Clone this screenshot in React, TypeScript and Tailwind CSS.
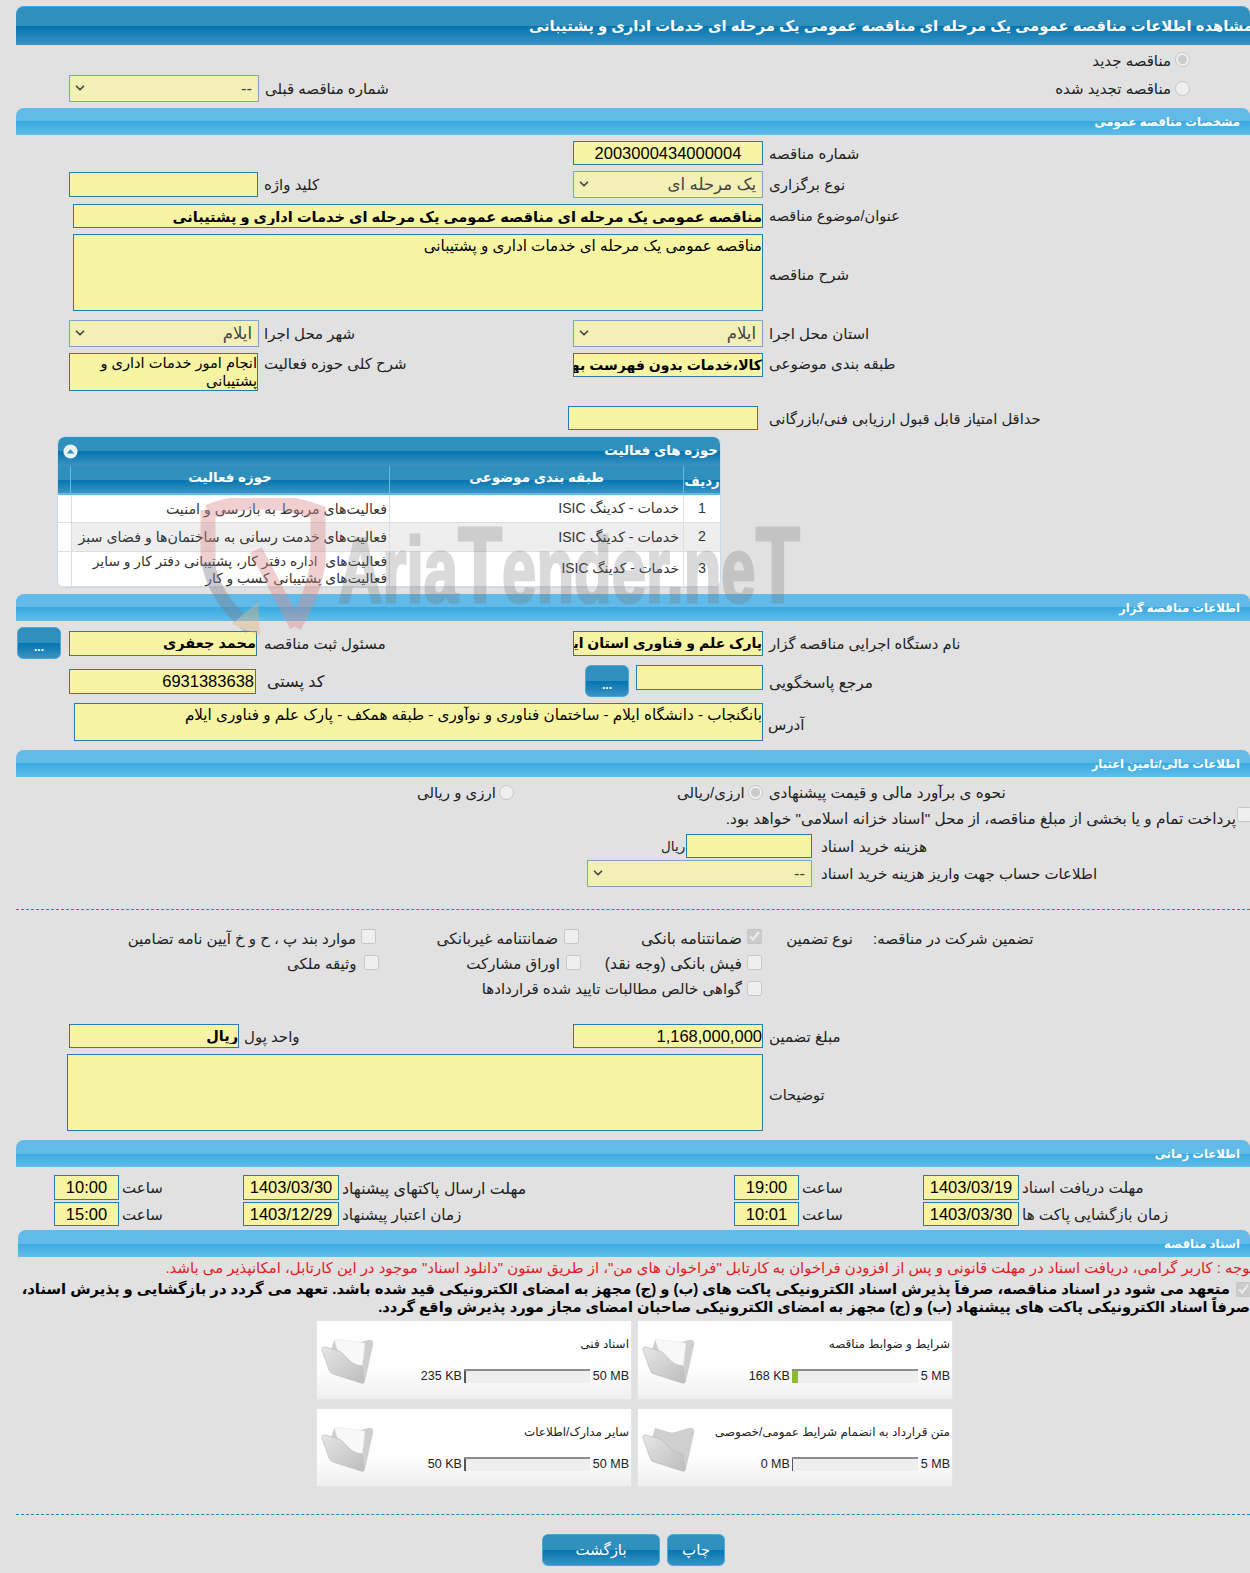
import type {ReactNode} from "react";
import {ChevronDown} from "lucide-react";

const FIELD = "border border-[#2a7ab0] bg-[#f7f5a3] text-black outline-none";
const SELECT = "appearance-none border border-[#7ea6c0] bg-[#f2f0b5] pr-[6px] text-[#444] text-[16.5px] outline-none";
const LABEL = "whitespace-nowrap pt-[2px] text-left text-[#222]";
const NUM = "[font-family:'Liberation_Sans',sans-serif] text-[16.5px]";
const MAIN_GRAD = "bg-[linear-gradient(#2f8fbd_0%,#2f8fbd_50%,#0474ae_50%,#3b93c4_100%)]";
const SECTION_GRAD = "bg-[linear-gradient(#62bae9_0%,#62bae9_50%,#39a9e0_50%,#63bdeb_100%)]";

function Section({title, className}: {title: string; className: string}) {
  return (
    <div
      dir="rtl"
      className={`${SECTION_GRAD} ${className} flex h-[27px] shrink-0 items-center rounded-t-[8px] pr-[10px] text-[11.6px] font-bold text-white`}>
      {title}
    </div>
  );
}

function Field({value = "", className}: {value?: string; className: string}) {
  return <input readOnly dir="rtl" value={value} className={`${FIELD} ${className}`} />;
}

function Picker({value, className}: {value: string; className: string}) {
  return (
    <div className={`relative shrink-0 ${className}`}>
      <select dir="rtl" defaultValue={value} className={`${SELECT} h-full w-full`}>
        <option>{value}</option>
      </select>
      <ChevronDown size={14} strokeWidth={3} className="pointer-events-none absolute left-[4px] top-[6px] text-[#444]" />
    </div>
  );
}

function Label({children, className = "", size = "text-[15px]"}: {children: ReactNode; className?: string; size?: string}) {
  return (
    <span dir="rtl" className={`${LABEL} ${size} ${className}`}>
      {children}
    </span>
  );
}

function Check({checked = false, className = ""}: {checked?: boolean; className?: string}) {
  return <input type="checkbox" disabled readOnly checked={checked} className={`h-[15px] w-[15px] shrink-0 ${className}`} />;
}

function Radio({checked = false, className = ""}: {checked?: boolean; className?: string}) {
  return <input type="radio" disabled readOnly checked={checked} className={`h-[15px] w-[15px] shrink-0 ${className}`} />;
}

function Folder({paper = true}: {paper?: boolean}) {
  return (
    <svg viewBox="0 0 54 47" className="h-[47px] w-[54px] shrink-0">
      <defs>
        <linearGradient id="fl" x1="0" y1="0" x2="1" y2="1">
          <stop offset="0" stopColor="#e6e6e6" />
          <stop offset="1" stopColor="#bdbdbd" />
        </linearGradient>
      </defs>
      <path d="M13 3 L27 7 Q30 8 33 7 L47 3 Q53 2 52 8 L44 44 Q43 47 40 45 L8 20 Z" fill="#cfcfcf" />
      {paper && <path d="M13 2 L44 6 L41 32 L20 24 Z" fill="#f8f8f8" stroke="#e2e2e2" strokeWidth="0.5" />}
      <path d="M1 13 Q0 10 4 10 L15 13 Q20 14 23 18 L29 24 Q32 27 36 28 L41 29 L43 45 Q43 47 40 46 L12 37 Q9 36 8 33 Z" fill="url(#fl)" stroke="#b5b5b5" strokeWidth="0.6" />
    </svg>
  );
}

function DocCard({title, used, max, fill, paper = true}: {title: string; used: string; max: string; fill: string; paper?: boolean}) {
  return (
    <div className="flex h-full w-[316px] shrink-0 items-start border border-[#e4e4e4] bg-[linear-gradient(#ffffff_0%,#ffffff_60%,#efefef_100%)]">
      <div className="ml-[4px] mt-[16px]">
        <Folder paper={paper} />
      </div>
      <div className="flex min-w-0 flex-1 flex-col">
        <div dir="rtl" className="mr-[2px] mt-[15px] h-[16px] whitespace-nowrap text-[12px] leading-[16px] text-[#222]">
          {title}
        </div>
        <div className="mt-[17px] flex h-[14px] items-center justify-end [font-family:'Liberation_Sans',sans-serif] text-[12.5px] text-[#222]">
          <span className="mr-[2px]">{used}</span>
          <div className="flex h-[14px] w-[126px] border-t-2 border-[#8c8c8c] bg-[#eeeeee]">
            <div className={`h-full ${fill}`} />
          </div>
          <span className="ml-[3px] mr-[2px]">{max}</span>
        </div>
      </div>
    </div>
  );
}

function DotsButton() {
  return (
    <button className={`${MAIN_GRAD} h-[32px] w-[44px] rounded-[6px] border border-[#4aa9d8] pt-[8px] text-[12px] font-bold leading-none text-white`}>
      ...
    </button>
  );
}

function Watermark() {
  return (
    <div className="pointer-events-none absolute left-0 top-0 z-10 h-[700px] w-[900px] overflow-hidden">
      <svg viewBox="0 0 130 140" className="absolute left-[198px] top-[498px] h-[140px] w-[130px] opacity-40">
        <path d="M10 14 Q62 -6 120 14 L120 66 Q114 100 96 128" fill="none" stroke="#d98a8a" strokeWidth="15" />
        <path d="M10 12 L10 66" fill="none" stroke="#d98a8a" strokeWidth="15" />
        <path d="M10 64 Q16 100 52 130" fill="none" stroke="#7d7d8a" strokeWidth="13" />
        <path d="M58 52 L98 128" fill="none" stroke="#d98a8a" strokeWidth="13" />
        <path d="M34 126 L60 104 L62 138 Z" fill="#e7b27a" />
      </svg>
      <div className="absolute left-[338px] top-[510px] origin-left scale-x-[.67] whitespace-nowrap text-[92px] font-bold leading-[110px] text-[#6e6e6e] opacity-25 [-webkit-text-stroke:3px_#6e6e6e] [font-family:'Liberation_Sans',sans-serif]">
        Aria<span className="text-[108px]">T</span>ender.ne<span className="text-[108px]">T</span>
      </div>
    </div>
  );
}

const ROWS = [
  {id: "1", activity: "فعالیت‌های مربوط به بازرسی و امنیت", bg: "bg-white", h: "h-[28px]", size: "text-[14.2px]"},
  {id: "2", activity: "فعالیت‌های خدمت رسانی به ساختمان‌ها و فضای سبز", bg: "bg-[#eeeeee]", h: "h-[29px]", size: "text-[14.2px]"},
  {id: "3", activity: "فعالیت‌های \u00a0اداره دفتر کار، پشتیبانی دفتر کار و سایر فعالیت‌های پشتیبانی کسب و کار", bg: "bg-white", h: "h-[35px]", size: "text-[13.8px]"},
];

export default function App() {
  return (
    <div className="relative flex h-[1573px] w-[1250px] flex-col overflow-hidden bg-[#e1e1e1] [font-family:'Liberation_Sans','DejaVu_Sans',sans-serif]">
      <Watermark />

      <div dir="rtl" className={`${MAIN_GRAD} ml-[16px] mt-[6px] flex h-[39px] shrink-0 items-center overflow-hidden rounded-t-[8px] border-t border-[#3ea6e4] text-[14.8px] font-bold text-white`}>
        <span className="mr-[-3px] whitespace-nowrap">مشاهده اطلاعات مناقصه عمومی یک مرحله ای مناقصه عمومی یک مرحله ای خدمات اداری و پشتیبانی</span>
      </div>

      <div className="mt-[7px] flex h-[16px] shrink-0 items-center justify-end pr-[60px]">
        <Label className="mr-[4px] mt-[1px]">مناقصه جدید</Label>
        <Radio checked className="mb-[2px]" />
      </div>
      <div className="mt-[7px] flex h-[27px] shrink-0 items-center">
        <Picker value="--" className="ml-[69px] h-[27px] w-[190px]" />
        <Label className="ml-[6px]">شماره مناقصه قبلی</Label>
        <div className="flex-1" />
        <Label className="mr-[4px]">مناقصه تجدید شده</Label>
        <Radio className="mr-[60px]" />
      </div>

      <Section title="مشخصات مناقصه عمومی" className="ml-[16px] mt-[6px]" />

      <div className="mt-[6px] flex h-[24px] shrink-0 items-center pl-[573px]">
        <input readOnly value="2003000434000004" className={`${FIELD} ${NUM} h-[24px] w-[190px] text-center`} />
        <Label className="ml-[6px]">شماره مناقصه</Label>
      </div>

      <div className="mt-[6px] flex h-[27px] shrink-0 items-center pl-[69px]">
        <div className="flex w-[504px] shrink-0 items-center">
          <Field className="h-[25px] w-[189px]" />
          <Label className="ml-[6px]">کلید واژه</Label>
        </div>
        <Picker value="یک مرحله ای" className="h-[27px] w-[190px]" />
        <Label className="ml-[6px]">نوع برگزاری</Label>
      </div>

      <div className="mt-[6px] flex h-[24px] shrink-0 items-center pl-[73px]">
        <Field value="مناقصه عمومی یک مرحله ای مناقصه عمومی یک مرحله ای خدمات اداری و پشتیبانی" className="h-[24px] w-[690px] text-[14.6px] font-bold" />
        <Label className="ml-[6px]" size="text-[14.5px]">عنوان/موضوع مناقصه</Label>
      </div>

      <div className="mt-[6px] flex h-[77px] shrink-0 items-center pl-[73px]">
        <textarea readOnly dir="rtl" value="مناقصه عمومی یک مرحله ای خدمات اداری و پشتیبانی" className={`${FIELD} h-[77px] w-[690px] resize-none text-[15.2px] text-[#222]`} />
        <Label className="ml-[6px] mt-[4px]">شرح مناقصه</Label>
      </div>

      <div className="mt-[9px] flex h-[27px] shrink-0 items-center pl-[69px]">
        <div className="flex w-[504px] shrink-0 items-center">
          <Picker value="ایلام" className="h-[27px] w-[190px]" />
          <Label className="ml-[5px]">شهر محل اجرا</Label>
        </div>
        <Picker value="ایلام" className="h-[27px] w-[190px]" />
        <Label className="ml-[6px]">استان محل اجرا</Label>
      </div>

      <div className="mt-[6px] flex h-[38px] shrink-0 items-start pl-[69px]">
        <div className="flex w-[504px] shrink-0 items-start">
          <textarea readOnly dir="rtl" value="انجام امور خدمات اداری و پشتیبانی" className={`${FIELD} h-[38px] w-[189px] resize-none overflow-hidden text-[14.6px] leading-[18px] text-[#222]`} />
          <Label className="ml-[6px] mt-[-2px]">شرح کلی حوزه فعالیت</Label>
        </div>
        <Field value="کالا،خدمات بدون فهرست بها" className="h-[24px] w-[190px] text-[14px] font-bold" />
        <Label className="ml-[6px] mt-[-2px]">طبقه بندی موضوعی</Label>
      </div>

      <div className="mt-[15px] flex h-[24px] shrink-0 items-center pl-[568px]">
        <Field className="h-[24px] w-[190px]" />
        <Label className="ml-[11px]" size="text-[14.8px]">حداقل امتیاز قابل قبول ارزیابی فنی/بازرگانی</Label>
      </div>

      <div className="ml-[57px] mt-[6px] h-[152px] w-[664px] shrink-0 overflow-hidden rounded-[8px] border border-[#c9dbe6] bg-white">
        <div className={`${MAIN_GRAD} flex h-[29px] items-center justify-between pl-[5px] pr-[2px]`}>
          <svg viewBox="0 0 16 16" className="h-[15px] w-[15px]">
            <circle cx="8" cy="8" r="7.5" fill="#e8f2f7" />
            <path d="M4 10 L8 5.5 L12 10 Z" fill="#2f8fbd" />
          </svg>
          <span dir="rtl" className="text-[13.4px] font-bold text-white">حوزه های فعالیت</span>
        </div>
        <div className={`${MAIN_GRAD} flex h-[29px] border-b-2 border-[#62bae9] text-[13.4px] font-bold text-white`}>
          <div className="w-[13px] border-r border-[#62bae9]" />
          <div dir="rtl" className="flex w-[319px] justify-center border-r border-[#62bae9] pt-[2px]">حوزه فعالیت</div>
          <div dir="rtl" className="flex w-[294px] justify-center border-r border-[#62bae9] pt-[2px]">طبقه بندی موضوعی</div>
          <div dir="rtl" className="flex flex-1 items-end justify-center pb-[1px]">ردیف</div>
        </div>
        {ROWS.map((r) => (
          <div key={r.id} className={`flex ${r.h} border-b border-[#dedede] text-[#333] ${r.size}`}>
            <div className="w-[13px] bg-white" />
            <div dir="rtl" className={`flex w-[319px] items-center border-l border-r border-[#dedede] pr-[2px] pt-[1px] leading-[17px] ${r.bg}`}>{r.activity}</div>
            <div dir="rtl" className={`flex w-[294px] items-center border-r border-[#dedede] pr-[4px] pt-[1px] ${r.bg}`}>خدمات - کدینگ ISIC</div>
            <div className={`flex flex-1 items-center justify-center ${r.bg}`}>{r.id}</div>
          </div>
        ))}
      </div>

      <Section title="اطلاعات مناقصه گزار" className="ml-[16px] mt-[6px]" />

      <div className="mt-[6px] flex h-[32px] shrink-0 items-center pl-[17px]">
        <div className="flex w-[556px] shrink-0 items-center">
          <DotsButton />
          <Field value="محمد جعفری" className="ml-[8px] h-[25px] w-[188px] text-[14.5px] font-bold" />
          <Label className="ml-[7px]">مسئول ثبت مناقصه</Label>
        </div>
        <Field value="پارک علم و فناوری استان ایلام" className="h-[25px] w-[190px] text-[14px] font-bold" />
        <Label className="ml-[6px]" size="text-[14.8px]">نام دستگاه اجرایی مناقصه گزار</Label>
      </div>

      <div className="mt-[6px] flex h-[32px] shrink-0 items-start pl-[69px]">
        <div className="mt-[3px] flex w-[516px] shrink-0 items-center">
          <input readOnly value="6931383638" className={`${FIELD} ${NUM} h-[25px] w-[187px] pr-[1px] text-right`} />
          <Label className="ml-[11px]" size="text-[16px]">کد پستی</Label>
        </div>
        <DotsButton />
        <Field className="ml-[7px] h-[25px] w-[127px]" />
        <Label className="ml-[6px] mt-[4px]" size="text-[15.4px]">مرجع پاسخگویی</Label>
      </div>

      <div className="mt-[6px] flex h-[38px] shrink-0 items-center pl-[74px]">
        <textarea readOnly dir="rtl" value="بانگنجاب - دانشگاه ایلام - ساختمان فناوری و نوآوری - طبقه همکف - پارک علم و فناوری ایلام" className={`${FIELD} h-[38px] w-[689px] resize-none text-[15.2px] text-[#222]`} />
        <Label className="ml-[5px] mt-[4px]">آدرس</Label>
      </div>

      <Section title="اطلاعات مالی/تامین اعتبار" className="ml-[16px] mt-[9px]" />

      <div className="mt-[7px] flex h-[16px] shrink-0 items-center pl-[420px]">
        <Label className="w-[76px]">ارزی و ریالی</Label>
        <Radio className="ml-[3px]" />
        <Label className="ml-[163px]">ارزی/ریالی</Label>
        <Radio checked className="ml-[3px]" />
        <Label className="ml-[6px]" size="text-[15.3px]">نحوه ی برآورد مالی و قیمت پیشنهادی</Label>
      </div>

      <div className="mt-[7px] flex h-[24px] shrink-0 items-start justify-end">
        <Label className="mr-[1px] mt-[-2px]" size="text-[15.35px]">پرداخت تمام و یا بخشی از مبلغ مناقصه، از محل "اسناد خزانه اسلامی" خواهد بود.</Label>
        <Check className="mr-[-2px]" />
      </div>

      <div className="mt-[3px] flex h-[24px] shrink-0 items-center pl-[661px]">
        <Label className="w-[25px]" size="text-[13.5px]">ریال</Label>
        <Field className="h-[24px] w-[126px]" />
        <Label className="ml-[9px]" size="text-[15.4px]">هزینه خرید اسناد</Label>
      </div>

      <div className="mt-[2px] flex h-[27px] shrink-0 items-center pl-[587px]">
        <Picker value="--" className="h-[27px] w-[225px]" />
        <Label className="ml-[9px]">اطلاعات حساب جهت واریز هزینه خرید اسناد</Label>
      </div>

      <div className="ml-[16px] mt-[22px] h-px shrink-0 border-t border-dashed border-[#2a85b8]" />

      <div className="mt-[18px] flex h-[16px] shrink-0 items-center">
        <Label className="ml-[130px] mt-[4px] w-[226px]">موارد بند پ ، ح و خ آیین نامه تضامین</Label>
        <Check className="ml-[5px]" />
        <Label className="ml-[62px] mt-[4px] w-[120px]" size="text-[15.4px]">ضمانتنامه غیربانکی</Label>
        <Check className="ml-[6px]" />
        <Label className="ml-[62px] mt-[4px] w-[101px]" size="text-[15.5px]">ضمانتنامه بانکی</Label>
        <Check className="ml-[5px]" checked />
        <Label className="ml-[25px] mt-[4px] w-[66px]">نوع تضمین</Label>
        <Label className="ml-[20px] mt-[4px]">تضمین شرکت در مناقصه:</Label>
      </div>

      <div className="mt-[10px] flex h-[16px] shrink-0 items-center">
        <Label className="ml-[287px] mt-[2px] w-[72px]">وثیقه ملکی</Label>
        <Check className="ml-[5px]" />
        <Label className="ml-[93px] mt-[2px] w-[88px]">اوراق مشارکت</Label>
        <Check className="ml-[6px]" />
        <Label className="ml-[24px] mt-[2px] w-[137px]" size="text-[15.7px]">فیش بانکی (وجه نقد)</Label>
        <Check className="ml-[5px]" />
      </div>

      <div className="mt-[10px] flex h-[16px] shrink-0 items-center">
        <Label className="ml-[482px] mt-[1px] w-[260px]">گواهی خالص مطالبات تایید شده قراردادها</Label>
        <Check className="ml-[5px]" />
      </div>

      <div className="mt-[28px] flex h-[24px] shrink-0 items-center pl-[69px]">
        <div className="flex w-[504px] shrink-0 items-center">
          <Field value="ریال" className="h-[24px] w-[170px] text-[14.5px] font-bold" />
          <Label className="ml-[5px]">واحد پول</Label>
        </div>
        <input readOnly value="1,168,000,000" className={`${FIELD} ${NUM} h-[24px] w-[190px] text-right`} />
        <Label className="ml-[6px]">مبلغ تضمین</Label>
      </div>

      <div className="mt-[6px] flex h-[77px] shrink-0 items-center pl-[67px]">
        <textarea readOnly className={`${FIELD} h-[77px] w-[696px] resize-none`} />
        <Label className="ml-[6px] mt-[4px]" size="text-[14.5px]">توضیحات</Label>
      </div>

      <Section title="اطلاعات زمانی" className="ml-[16px] mt-[9px]" />

      {[
        {a: "10:00", b: "1403/03/30", la: "مهلت ارسال پاکتهای پیشنهاد", c: "19:00", d: "1403/03/19", lb: "مهلت دریافت اسناد", h: "h-[25px] mt-[8px]", ls: "text-[15.8px]"},
        {a: "15:00", b: "1403/12/29", la: "زمان اعتبار پیشنهاد", c: "10:01", d: "1403/03/30", lb: "زمان بازگشایی پاکت ها", h: "h-[24px] mt-[2px]", ls: "text-[15.2px]"},
      ].map((t) => (
        <div key={t.b} className={`flex shrink-0 items-stretch pl-[54px] ${t.h}`}>
          <input readOnly value={t.a} className={`${FIELD} ${NUM} w-[65px] text-center`} />
          <Label className="ml-[3px] w-[121px] self-center">ساعت</Label>
          <input readOnly value={t.b} className={`${FIELD} ${NUM} w-[96px] text-center`} />
          <Label className="ml-[3px] w-[392px] self-center" size={t.ls}>{t.la}</Label>
          <input readOnly value={t.c} className={`${FIELD} ${NUM} w-[65px] text-center`} />
          <Label className="ml-[3px] w-[121px] self-center">ساعت</Label>
          <input readOnly value={t.d} className={`${FIELD} ${NUM} w-[96px] text-center`} />
          <Label className="ml-[3px] self-center" size="text-[15.2px]">{t.lb}</Label>
        </div>
      ))}

      <Section title="اسناد مناقصه" className="ml-[18px] mt-[4px]" />

      <div dir="rtl" className="mt-[2px] h-[18px] shrink-0 overflow-hidden whitespace-nowrap text-[14.9px] leading-[18px] text-[#e0201c]">
        <span className="mr-[-4px]">توجه : کاربر گرامی، دریافت اسناد در مهلت قانونی و پس از افزودن فراخوان به کارتابل "فراخوان های من"، از طریق ستون "دانلود اسناد" موجود در این کارتابل، امکانپذیر می باشد.</span>
      </div>
      <div className="mt-[3px] flex h-[36px] shrink-0 flex-col items-end overflow-hidden whitespace-nowrap font-bold leading-[18px] text-black">
        <div className="flex items-center">
          <span dir="rtl" className="text-[14.8px]">متعهد می شود در اسناد مناقصه، صرفاً پذیرش اسناد الکترونیکی پاکت های (ب) و (ج) مجهز به امضای الکترونیکی قید شده باشد. تعهد می گردد در بازگشایی و پذیرش اسناد،</span>
          <Check checked className="ml-[6px] mr-[-1px]" />
        </div>
        <span dir="rtl" className="text-[14.65px]">صرفاً اسناد الکترونیکی پاکت های پیشنهاد (ب) و (ج) مجهز به امضای الکترونیکی صاحبان امضای مجاز مورد پذیرش واقع گردد.</span>
      </div>

      <div className="ml-[316px] mt-[4px] flex h-[80px] shrink-0 gap-[5px]">
        <DocCard title="اسناد فنی" used="235 KB" max="50 MB" fill="w-[2px] bg-[#555]" />
        <DocCard title="شرایط و ضوابط مناقصه" used="168 KB" max="5 MB" fill="w-[6px] bg-[#8fb92e]" />
      </div>
      <div className="ml-[316px] mt-[8px] flex h-[79px] shrink-0 gap-[5px]">
        <DocCard title="سایر مدارک/اطلاعات" used="50 KB" max="50 MB" fill="w-[2px] bg-[#555]" />
        <DocCard title="متن قرارداد به انضمام شرایط عمومی/خصوصی" used="0 MB" max="5 MB" fill="w-[1px] bg-[#555]" paper={false} />
      </div>

      <div className="ml-[16px] mt-[27px] h-px shrink-0 border-t border-dashed border-[#2a85b8]" />

      <div className="ml-[542px] mt-[19px] flex h-[32px] shrink-0 gap-[7px]">
        <button dir="rtl" className={`${MAIN_GRAD} h-[32px] w-[118px] rounded-[6px] border border-[#4aa9d8] text-[15px] text-white`}>بازگشت</button>
        <button dir="rtl" className={`${MAIN_GRAD} h-[32px] w-[58px] rounded-[6px] border border-[#4aa9d8] text-[15px] text-white`}>چاپ</button>
      </div>
    </div>
  );
}
